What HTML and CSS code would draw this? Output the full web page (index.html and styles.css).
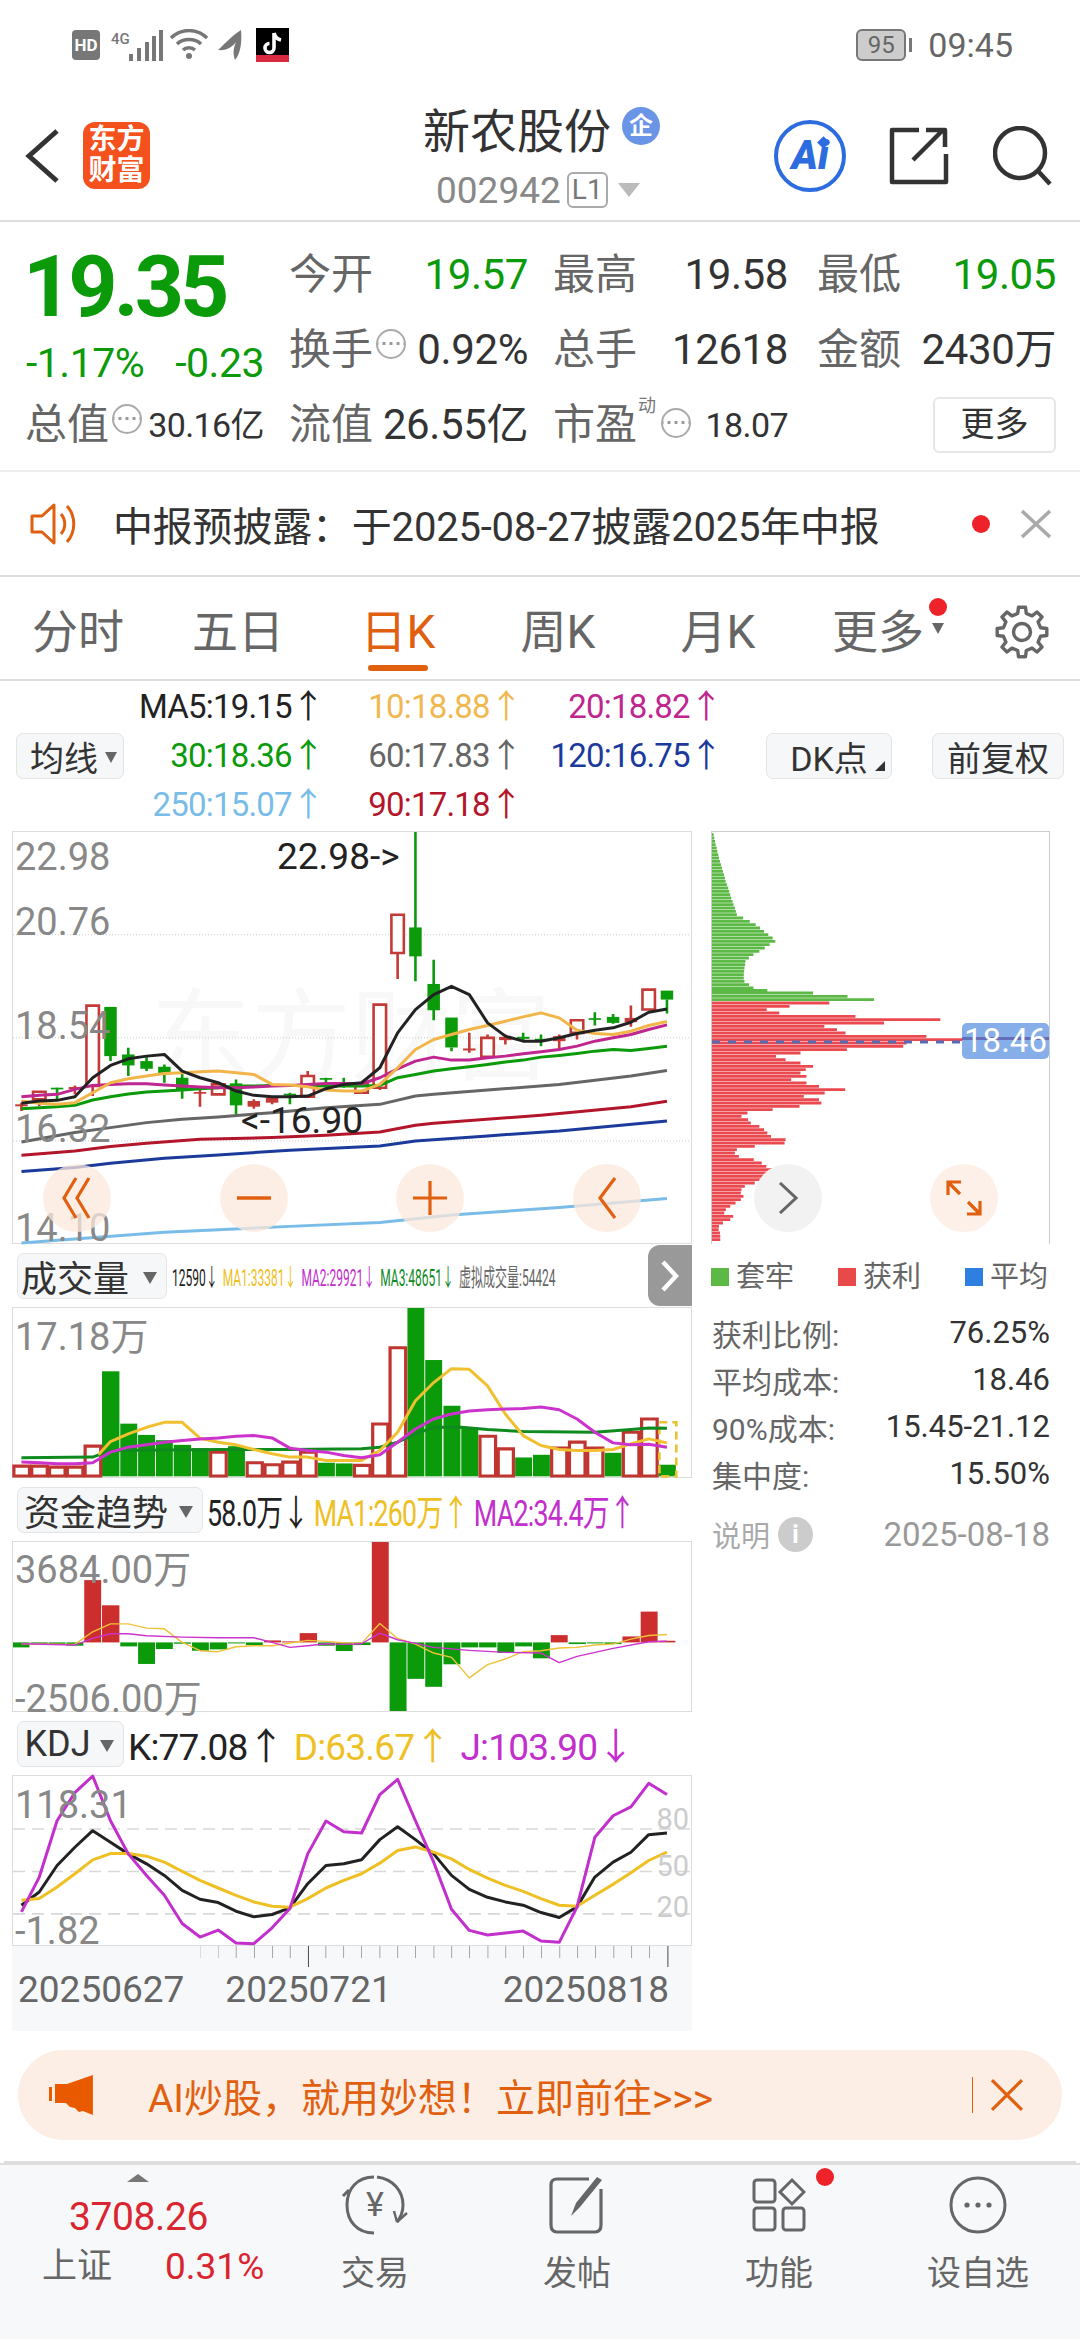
FILE: index.html
```html
<!DOCTYPE html>
<html lang="zh-CN">
<head>
    <meta charset="UTF-8">
    <meta name="viewport" content="width=device-width, initial-scale=1.0">
    <title>新农股份 002942</title>
    <link rel="stylesheet" href="styles.css">
</head>
<body>
    <div class="statusbar">
        <div class="status-left">
            <span class="hd">HD</span>
            <span class="net">4G</span>
            <svg width="36" height="32" viewBox="0 0 36 32"><path d="M3 32V25M11 32V19M19 32V13M26 32V7M33 32V1" stroke="#777" stroke-width="4"/></svg>
            <svg class="wifi" width="40" height="32" viewBox="0 0 40 32" fill="none" stroke="#777" stroke-width="3.4"><path d="M2 9C12-1 28-1 38 9M8 15C14 9 26 9 32 15M14 21C17 18 23 18 26 21"/><circle cx="20" cy="27" r="3" fill="#777" stroke="none"/></svg>
            <svg class="leaf" width="26" height="32" viewBox="0 0 26 32"><path d="M24 1C25 12 24 24 18 31C16 25 16 20 19 13C15 18 10 22 1 21C7 16 14 7 24 1Z" fill="#777"/></svg>
            <span class="tiktok">
                <svg width="22" height="26" viewBox="0 0 22 26"><path d="M12 2V17A4.5 4.5 0 1 1 7.5 12.5M12 2C13 6 15 8 19 9" fill="none" stroke="#fff" stroke-width="3.6"/></svg>
                <i class="tiktok-bar"></i>
            </span>
        </div>
        <div class="status-right">
            <span class="battery"><b>95</b></span><i class="battery-tip"></i>
            <span class="clock">09:45</span>
        </div>
    </div>

    <div class="header">
        <svg class="back" width="36" height="56" viewBox="0 0 36 56"><path d="M32 3L4 28L32 53" fill="none" stroke="#333" stroke-width="5"/></svg>
        <div class="logo">东方<br>财富</div>
        <div class="title-block">
            <div class="title">新农股份<span class="qi">企</span></div>
            <div class="code">002942<span class="l1">L1</span><i class="code-arrow"></i></div>
        </div>
        <div class="ai-icon">Ai<i class="ai-star"></i></div>
        <svg class="share" width="60" height="58" viewBox="0 0 60 58" fill="none" stroke="#333" stroke-width="4.5"><path d="M30 3H3V55H57V27M24 33L54 3M37 3H56V20" stroke-linejoin="round"/></svg>
        <svg class="search" width="60" height="60" viewBox="0 0 60 60" fill="none" stroke="#333" stroke-width="4.5"><circle cx="27" cy="27" r="25"/><path d="M45 45L57 58"/></svg>
    </div>

    <div class="quote">
        <div class="price-block">
            <div class="price">19.35</div>
            <div class="change"><span>-1.17%</span><span>-0.23</span></div>
        </div>
        <div class="cell"><span class="lab">今开</span><span class="val green">19.57</span></div>
        <div class="cell c3"><span class="lab">最高</span><span class="val">19.58</span></div>
        <div class="cell"><span class="lab">最低</span><span class="val green">19.05</span></div>
        <div class="cell"><span class="lab">换手<i class="dots"></i></span><span class="val">0.92%</span></div>
        <div class="cell c3"><span class="lab">总手</span><span class="val">12618</span></div>
        <div class="cell"><span class="lab">金额</span><span class="val">2430万</span></div>
        <div class="cell"><span class="lab">总值<i class="dots"></i></span><span class="val small">30.16亿</span></div>
        <div class="cell"><span class="lab">流值</span><span class="val">26.55亿</span></div>
        <div class="cell c3"><span class="lab">市盈<sup class="dyn">动</sup><i class="dots"></i></span><span class="val small">18.07</span></div>
        <div class="cell end"><span class="more-btn">更多</span></div>
    </div>

    <div class="notice">
        <svg class="speaker" width="52" height="44" viewBox="0 0 52 44" fill="none" stroke="#e0600f" stroke-width="3"><path d="M3 14H13L25 3V41L13 30H3Z" stroke-linejoin="round"/><path d="M32 12C37 18 37 26 32 32M38 4C47 14 47 30 38 40"/></svg>
        <span class="notice-text">中报预披露：于2025-08-27披露2025年中报</span>
        <i class="red-dot"></i>
        <svg class="notice-x" width="32" height="30" viewBox="0 0 32 30"><path d="M2 2L30 28M30 2L2 28" stroke="#aaa" stroke-width="3.6"/></svg>
    </div>

    <div class="tabs">
        <span class="tab">分时</span>
        <span class="tab">五日</span>
        <span class="tab active">日K</span>
        <span class="tab">周K</span>
        <span class="tab">月K</span>
        <span class="tab">更多<i class="tab-dot"></i><i class="tab-arrow"></i></span>
        <svg class="gear" width="54" height="54" viewBox="-27 -27 54 54" fill="none" stroke="#666" stroke-width="3.4" stroke-linejoin="round"><path d="M-4.3-18.5L-3.5-24.8H3.5L4.3-18.5L10.1-16.1L15-20L20-15L16.1-10.1L18.5-4.3L24.8-3.5V3.5L18.5 4.3L16.1 10.1L20 15L15 20L10.1 16.1L4.3 18.5L3.5 24.8H-3.5L-4.3 18.5L-10.1 16.1L-15 20L-20 15L-16.1 10.1L-18.5 4.3L-24.8 3.5V-3.5L-18.5-4.3L-16.1-10.1L-20-15L-15-20L-10.1-16.1Z"/><circle r="8.5"/></svg>
    </div>

    <div class="ma-panel">
        <span class="chip junxian">均线<i class="tri"></i></span>
        <div class="ma-grid">
            <span class="c-black">MA5:19.15↑</span><span class="c-orange">10:18.88↑</span><span class="c-pink">20:18.82↑</span>
            <span class="c-green">30:18.36↑</span><span class="c-grey">60:17.83↑</span><span class="c-navy">120:16.75↑</span>
            <span class="c-sky">250:15.07↑</span><span class="c-red">90:17.18↑</span>
        </div>
        <span class="chip dk">DK点<i class="corner"></i></span>
        <span class="chip fq">前复权</span>
    </div>

    <div class="charts">
        <div class="left-col">
            <div class="pane main-pane">
                <span class="watermark">东方财富</span>
                <svg class="plot" viewBox="28 36 1523 1236" preserveAspectRatio="none">
                    <path d="M28 345H1551M28 655H1551M28 965H1551" stroke="#ccc" stroke-width="1" stroke-dasharray="1 2"/>
                    <g stroke="#c43a36" stroke-width="2.6" fill="none">
                        <path d="M47 850V875M87 840V860M167 798V825M207 800V830M448 810V862M569 840V868M610 830V855M690 755V835M852 805V812M892 400V478M1053 640V700M1094 645V655M1134 645V675M1255 645V688M1295 640V660M1416 558V622"/>
                        <rect x="73" y="817" width="28" height="23" fill="#fff"/><rect x="193" y="558" width="28" height="242" fill="#fff"/><rect x="475" y="795" width="28" height="30" fill="#fff"/><rect x="676" y="770" width="28" height="62" fill="#fff"/><rect x="797" y="795" width="28" height="25" fill="#fff"/><rect x="838" y="555" width="28" height="250" fill="#fff"/><rect x="878" y="285" width="28" height="115" fill="#fff"/><rect x="1080" y="655" width="28" height="57" fill="#fff"/><rect x="1281" y="602" width="28" height="38" fill="#fff"/><rect x="1442" y="510" width="28" height="60" fill="#fff"/>
                    </g>
                    <g fill="#c43a36">
                        <rect x="33" y="855" width="28" height="6"/><rect x="153" y="803" width="28" height="6"/><rect x="434" y="818" width="28" height="5"/><rect x="555" y="845" width="28" height="17"/><rect x="596" y="835" width="28" height="15"/><rect x="1039" y="687" width="28" height="6"/><rect x="1120" y="652" width="28" height="10"/><rect x="1241" y="650" width="28" height="15"/><rect x="1402" y="595" width="28" height="13"/>
                    </g>
                    <g fill="#0a9a0a">
                        <path d="M127 805V845M247 700V725M287 685V770M328 712V755M368 735V790M408 760V838M529 780V885M650 820V855M731 775V805M771 775V805M932 36V485M973 420V602M1013 684V695M1174 640V668M1214 645V680M1335 578V618M1376 583V613M1497 540V582" stroke="#0a9a0a" stroke-width="2.6"/>
                        <rect x="113" y="805" width="28" height="5"/><rect x="233" y="562" width="28" height="148"/><rect x="273" y="705" width="28" height="33"/><rect x="314" y="725" width="28" height="23"/><rect x="354" y="742" width="28" height="23"/><rect x="394" y="775" width="28" height="35"/><rect x="515" y="792" width="28" height="66"/><rect x="636" y="823" width="28" height="5"/><rect x="717" y="776" width="28" height="5"/><rect x="757" y="788" width="28" height="5"/><rect x="918" y="323" width="28" height="87"/><rect x="959" y="493" width="28" height="79"/><rect x="999" y="594" width="28" height="90"/><rect x="1160" y="652" width="28" height="6"/><rect x="1200" y="658" width="28" height="5"/><rect x="1321" y="596" width="28" height="5"/><rect x="1362" y="592" width="28" height="18"/><rect x="1483" y="513" width="28" height="27"/>
                    </g>
                    <g fill="none" stroke-width="3" stroke-linejoin="round">
                        <polyline stroke="#79bce8" points="47,1272 368,1240 650,1222 852,1210 1013,1188 1255,1165 1497,1138"/>
                        <polyline stroke="#1c3a9b" points="47,1057 167,1045 247,1032 368,1017 489,1007 650,993 852,980 932,965 1094,950 1255,935 1497,905"/>
                        <polyline stroke="#b3162a" points="47,1008 167,995 247,982 328,972 448,960 610,955 731,948 852,938 932,918 973,912 1214,888 1416,862 1497,846"/>
                        <polyline stroke="#666" points="47,968 167,940 247,925 328,910 408,900 489,893 610,880 731,865 852,855 932,830 973,825 1094,812 1255,795 1416,770 1497,753"/>
                        <polyline stroke="#0a9a0a" points="47,868 87,865 127,862 167,858 207,842 247,832 287,824 328,818 368,815 408,812 448,808 489,805 529,800 569,800 610,798 650,798 690,798 731,800 771,800 811,800 852,798 892,775 932,765 973,755 1013,748 1053,742 1094,735 1134,728 1174,722 1214,713 1255,708 1295,702 1335,695 1376,690 1416,693 1456,687 1497,680"/>
                        <polyline stroke="#c0268f" points="47,832 87,828 127,825 167,810 207,798 247,795 287,793 328,793 368,797 408,800 448,803 489,805 529,805 569,803 610,800 650,798 690,795 731,792 771,792 811,793 852,775 892,748 932,725 973,713 1013,722 1053,722 1094,715 1134,710 1174,703 1214,697 1255,690 1295,680 1335,665 1376,655 1416,645 1456,630 1497,616"/>
                        <polyline stroke="#f2b54a" points="47,845 87,852 127,855 167,850 207,820 247,790 287,778 328,770 368,762 408,760 448,757 489,755 529,760 569,765 610,795 650,797 690,802 731,812 771,815 811,815 852,795 892,745 932,690 973,660 1013,645 1053,630 1094,618 1134,605 1174,592 1214,580 1255,595 1295,632 1335,642 1376,645 1416,635 1456,618 1497,606"/>
                        <polyline stroke="#222" points="47,852 87,845 127,843 167,832 207,775 247,738 287,718 328,710 368,705 408,755 448,775 489,790 529,815 569,828 610,832 650,832 690,830 731,808 771,795 811,790 852,745 892,640 932,570 973,525 1013,500 1053,525 1094,610 1134,650 1174,665 1214,665 1255,655 1295,642 1335,632 1376,625 1416,608 1456,578 1497,568"/>
                    </g>
                </svg>
                <span class="ylab y1">22.98</span>
                <span class="ylab y2">20.76</span>
                <span class="ylab y3">18.54</span>
                <span class="ylab y4">16.32</span>
                <span class="ylab y5">14.10</span>
                <span class="mark mark-high">22.98-&gt;</span>
                <span class="mark mark-low">&lt;-16.90</span>
                <div class="round-btns">
                    <span class="round"><svg width="30" height="42" viewBox="0 0 30 42" fill="none" stroke="#e0600f" stroke-width="3.2"><path d="M14 1L2 21L14 41M27 1L15 21L27 41"/></svg></span>
                    <span class="round"><svg width="36" height="6" viewBox="0 0 36 6"><path d="M1 3H35" stroke="#e0600f" stroke-width="3.4"/></svg></span>
                    <span class="round"><svg width="36" height="36" viewBox="0 0 36 36"><path d="M1 18H35M18 1V35" stroke="#e0600f" stroke-width="3.2"/></svg></span>
                    <span class="round"><svg width="20" height="42" viewBox="0 0 20 42" fill="none" stroke="#e0600f" stroke-width="3.2"><path d="M18 1L3 21L18 41"/></svg></span>
                </div>
            </div>

            <div class="toolbar">
                <span class="chip pick vol-pick">成交量<i class="tri big"></i></span>
                <span class="tiny"><span class="c-black">12590↓</span> <span class="c-gold">MA1:33381↓</span> <span class="c-violet">MA2:29921↓</span> <span class="c-dgreen">MA3:48651↓</span> <span class="c-grey">虚拟成交量:54424</span></span>
                <span class="expand-tab"><svg width="20" height="32" viewBox="0 0 20 32" fill="none" stroke="#fff" stroke-width="4.4"><path d="M3 2L16 16L3 30"/></svg></span>
            </div>

            <div class="pane sub-pane">
                <span class="ylab v1">17.18万</span>
                <svg class="plot" viewBox="28 205 1523 510" preserveAspectRatio="none">
                    <g fill="#0a9a0a">
                        <rect x="228" y="396" width="39" height="317"/><rect x="269" y="554" width="38" height="159"/><rect x="309" y="588" width="38" height="125"/><rect x="349" y="604" width="38" height="109"/><rect x="389" y="618" width="39" height="95"/><rect x="430" y="628" width="38" height="85"/><rect x="511" y="622" width="38" height="91"/><rect x="713" y="672" width="38" height="41"/><rect x="753" y="674" width="38" height="39"/><rect x="914" y="205" width="38" height="508"/><rect x="954" y="362" width="38" height="351"/><rect x="995" y="500" width="38" height="213"/><rect x="1035" y="565" width="38" height="148"/><rect x="1156" y="656" width="38" height="57"/><rect x="1196" y="648" width="38" height="65"/><rect x="1357" y="642" width="38" height="71"/><rect x="1478" y="678" width="39" height="35"/>
                    </g>
                    <g fill="#fff" stroke="#bf3530" stroke-width="3.2">
                        <rect x="30" y="682" width="35" height="30"/><rect x="70" y="682" width="35" height="30"/><rect x="110" y="685" width="35" height="27"/><rect x="150" y="685" width="35" height="27"/><rect x="190" y="622" width="35" height="90"/><rect x="472" y="640" width="35" height="72"/><rect x="554" y="672" width="34" height="40"/><rect x="594" y="678" width="34" height="34"/><rect x="634" y="670" width="34" height="42"/><rect x="674" y="640" width="35" height="72"/><rect x="795" y="680" width="35" height="32"/><rect x="836" y="555" width="34" height="157"/><rect x="875" y="325" width="35" height="387"/><rect x="1077" y="592" width="35" height="120"/><rect x="1118" y="630" width="34" height="82"/><rect x="1238" y="628" width="34" height="84"/><rect x="1278" y="610" width="35" height="102"/><rect x="1319" y="628" width="34" height="84"/><rect x="1399" y="580" width="35" height="132"/><rect x="1440" y="540" width="35" height="172"/>
                    </g>
                    <rect x="1480" y="550" width="38" height="163" fill="none" stroke="#e8c230" stroke-width="2.6" stroke-dasharray="8 5"/>
                    <g fill="none" stroke-width="3" stroke-linejoin="round">
                        <polyline stroke="#0f8a1f" points="47,657 207,655 247,635 489,632 650,632 811,630 852,625 892,610 932,585 973,565 1035,565 1094,572 1174,578 1335,580 1416,572 1456,567 1497,568"/>
                        <polyline stroke="#f0c030" points="220,648 247,608 287,585 328,565 368,550 408,550 448,598 489,610 529,618 569,632 610,645 650,655 690,655 731,665 771,665 811,665 852,635 892,580 932,485 973,430 1013,388 1053,390 1094,440 1134,525 1174,590 1214,620 1255,632 1295,635 1335,635 1376,632 1416,615 1456,600 1497,612"/>
                        <polyline stroke="#cc33cc" points="47,670 87,672 127,675 167,675 207,672 247,640 287,625 328,618 368,610 408,605 448,600 489,597 529,592 569,590 610,597 650,628 690,635 731,640 771,650 811,657 852,648 892,610 932,570 973,540 1013,525 1053,516 1094,512 1134,510 1174,508 1214,504 1255,512 1295,540 1335,580 1376,612 1416,618 1456,616 1497,625"/>
                    </g>
                </svg>
            </div>

            <div class="toolbar">
                <span class="chip pick fund-pick">资金趋势<i class="tri big"></i></span>
                <span class="metrics fund-vals"><span class="c-black">58.0万↓</span><span class="c-gold">MA1:260万↑</span><span class="c-violet">MA2:34.4万↑</span></span>
            </div>

            <div class="pane sub-pane">
                <span class="ylab f1">3684.00万</span>
                <span class="ylab f2">-2506.00万</span>
                <svg class="plot" viewBox="28 187 1523 510" preserveAspectRatio="none">
                    <g fill="#cc2e2e">
                        <rect x="188" y="302" width="38" height="188"/><rect x="228" y="378" width="39" height="112"/><rect x="592" y="484" width="38" height="6"/><rect x="632" y="487" width="38" height="3"/><rect x="672" y="462" width="39" height="28"/><rect x="834" y="187" width="38" height="303"/><rect x="1236" y="468" width="38" height="22"/><rect x="1397" y="472" width="39" height="18"/><rect x="1438" y="397" width="38" height="93"/><rect x="1478" y="485" width="38" height="5"/>
                    </g>
                    <g fill="#0a9a0a">
                        <rect x="28" y="490" width="37" height="15"/><rect x="68" y="490" width="38" height="6"/><rect x="108" y="490" width="38" height="6"/><rect x="148" y="490" width="38" height="10"/><rect x="269" y="490" width="38" height="12"/><rect x="309" y="490" width="38" height="65"/><rect x="349" y="490" width="38" height="20"/><rect x="389" y="490" width="39" height="4"/><rect x="430" y="490" width="38" height="25"/><rect x="470" y="490" width="39" height="21"/><rect x="511" y="490" width="38" height="3"/><rect x="551" y="490" width="38" height="8"/><rect x="713" y="490" width="38" height="10"/><rect x="753" y="490" width="38" height="26"/><rect x="793" y="490" width="38" height="8"/><rect x="874" y="490" width="38" height="207"/><rect x="914" y="490" width="38" height="110"/><rect x="954" y="490" width="38" height="134"/><rect x="995" y="490" width="38" height="66"/><rect x="1035" y="490" width="38" height="15"/><rect x="1075" y="490" width="39" height="15"/><rect x="1116" y="490" width="38" height="32"/><rect x="1156" y="490" width="38" height="12"/><rect x="1196" y="490" width="38" height="48"/><rect x="1276" y="490" width="39" height="5"/><rect x="1317" y="490" width="38" height="3"/><rect x="1357" y="490" width="38" height="5"/>
                    </g>
                    <g fill="none" stroke-width="1.4" stroke-linejoin="round">
                        <polyline stroke="#efc23a" points="47,494 167,496 207,458 247,434 287,434 328,447 368,449 408,490 448,515 489,518 529,503 569,500 610,500 650,492 690,484 731,487 771,491 811,493 852,433 892,478 932,495 973,522 1013,535 1053,597 1094,557 1134,540 1174,518 1214,515 1255,507 1295,505 1335,498 1376,495 1416,480 1456,469 1497,466"/>
                        <polyline stroke="#cc33cc" points="47,494 167,498 207,478 247,464 287,464 328,470 408,474 489,476 569,476 610,490 650,505 690,500 731,494 771,496 811,494 852,462 892,482 932,493 973,505 1053,514 1134,520 1214,522 1255,551 1295,532 1376,508 1456,488 1497,486"/>
                    </g>
                </svg>
            </div>

            <div class="toolbar">
                <span class="chip pick kdj-pick">KDJ<i class="tri big"></i></span>
                <span class="metrics kdj-vals"><span class="c-black">K:77.08↑</span><span class="c-gold">D:63.67↑</span><span class="c-violet">J:103.90↓</span></span>
            </div>

            <div class="pane sub-pane">
                <span class="ylab k1">118.31</span>
                <span class="ylab k2">-1.82</span>
                <span class="lev l80">80</span>
                <span class="lev l50">50</span>
                <span class="lev l20">20</span>
                <svg class="plot" viewBox="28 170 1523 510" preserveAspectRatio="none">
                    <path d="M28 330H1551M28 458H1551M28 586H1551" stroke="#d8d8d8" stroke-width="1.6" stroke-dasharray="12 7"/>
                    <g fill="none" stroke-width="3" stroke-linejoin="round">
                        <polyline stroke="#222" points="47,560 87,520 127,440 167,385 207,335 247,370 287,405 328,435 368,470 408,515 448,542 489,552 529,578 569,595 610,588 650,568 690,495 731,440 771,435 811,423 852,362 892,323 932,362 973,405 1013,470 1053,512 1094,536 1134,550 1174,560 1214,582 1255,597 1295,565 1335,475 1376,430 1416,400 1456,347 1497,342"/>
                        <polyline stroke="#efc023" points="47,545 87,540 127,505 167,465 207,423 247,404 287,404 328,412 368,430 408,458 448,485 489,508 529,530 569,550 610,563 650,566 690,540 731,508 771,485 811,465 852,433 892,395 932,384 973,400 1013,420 1053,452 1094,478 1134,500 1174,518 1214,540 1255,560 1295,563 1335,530 1376,497 1416,462 1456,425 1497,400"/>
                        <polyline stroke="#c22fcc" points="47,580 87,475 127,305 167,220 207,170 247,305 287,405 328,470 368,530 408,615 448,656 489,635 529,674 569,676 610,628 650,570 690,405 731,306 771,338 811,342 852,226 892,180 932,305 973,430 1013,572 1053,636 1094,650 1134,644 1174,638 1214,668 1255,672 1295,565 1335,355 1376,290 1416,263 1456,192 1497,226"/>
                    </g>
                </svg>
            </div>

            <div class="axis">
                <svg class="axis-ticks" width="680" height="24" viewBox="28 0 1523 24" preserveAspectRatio="none">
                    <path d="M530 0V12M571 0V12M611 0V12M651 0V12M731 0V12M771 0V12M811 0V12M852 0V12M892 0V12M932 0V12M973 0V12M1013 0V12M1053 0V12M1094 0V12M1134 0V12M1174 0V12M1214 0V12M1255 0V12M1295 0V12M1335 0V12M1376 0V12M1416 0V12M1456 0V12" stroke="#777" stroke-width="1.4"/>
                    <path d="M450 0V12" stroke="#ccc" stroke-width="1.4"/><path d="M490 0V12" stroke="#aaa" stroke-width="1.4"/>
                    <path d="M692 0V21M1497 0V21" stroke="#555" stroke-width="2.4"/>
                </svg>
                <div class="dates"><span>20250627</span><span class="d2">20250721</span><span class="d3">20250818</span></div>
            </div>
        </div>

        <div class="right-col">
            <div class="chip-pane">
                <svg class="plot" viewBox="33 37 1017 1236" preserveAspectRatio="none">
                    <path stroke="#5cb946" stroke-width="2.9" fill="none" d="M33 45H38M33 55H40M33 65H42M33 75H44M33 85H47M33 95H49M33 105H52M33 115H54M33 125H57M33 135H60M33 145H63M33 155H66M33 165H69M33 175H72M33 185H74M33 195H78M33 205H82M33 215H85M33 225H88M33 235H91M33 245H95M33 255H98M33 265H102M33 275H105M33 285H108M33 295H127M33 305H147M33 315H165M33 325H178M33 335H190M33 345H203M33 355H216M33 365H224M33 375H207M33 385H192M33 395H176M33 405H158M33 415H144M33 425H134M33 435H133M33 445H131M33 455H130M33 465H129M33 475H129M33 485H131M33 495H145M33 505H158M33 512H200M33 520H338M33 530H442M33 540H522"/>
                    <path stroke="#ea4a4f" stroke-width="2.9" fill="none" d="M33 550H387M33 560H267M33 570H198M33 580H236M33 590H466M33 600H722M33 610H552M33 620H372M33 630H410M33 640H436M33 650H680M33 660H800M33 670H620M33 680H610M33 690H440M33 700H300M33 710H226M33 720H255M33 730H300M33 740H338M33 750H316M33 760H300M33 770H318M33 780H272M33 790H318M33 800H356M33 810H435M33 820H373M33 830H310M33 840H356M33 850H363M33 860H297M33 870H216M33 880H140M33 890H122M33 900H142M33 910H150M33 920H176M33 930H190M33 940H200M33 950H211M33 960H255M33 970H252M33 980H162M33 990H108M33 1000H102M33 1010H114M33 1020H159M33 1030H183M33 1040H197M33 1050H241M33 1060H295M33 1070H275M33 1080H232M33 1090H162M33 1100H132M33 1110H122M33 1120H120M33 1130H128M33 1140H120M33 1150H104M33 1160H88M33 1170H75M33 1180H70M33 1190H97M33 1200H88M33 1210H66M33 1220H54M33 1230H53M33 1240H57M33 1250H58M33 1260H58"/>
                    <path d="M33 667H790" stroke="#5a6bb5" stroke-width="3" stroke-dasharray="8 8"/>
                </svg>
                <span class="avg-tag">18.46</span>
                <span class="round grey-round"><svg width="20" height="32" viewBox="0 0 20 32" fill="none" stroke="#666" stroke-width="3"><path d="M2 1L18 16L2 31"/></svg></span>
                <span class="round fit-round"><svg width="36" height="36" viewBox="0 0 36 36" fill="none" stroke="#e0600f" stroke-width="3.2"><path d="M2 15V2H15M2 2L14 14M34 21V34H21M34 34L22 22"/></svg></span>
            </div>
            <div class="legend">
                <span><i class="sq sq-green"></i>套牢</span>
                <span><i class="sq sq-red"></i>获利</span>
                <span><i class="sq sq-blue"></i>平均</span>
            </div>
            <div class="stats">
                <div class="stat"><span>获利比例:</span><b>76.25%</b></div>
                <div class="stat"><span>平均成本:</span><b>18.46</b></div>
                <div class="stat"><span>90%成本:</span><b>15.45-21.12</b></div>
                <div class="stat"><span>集中度:</span><b>15.50%</b></div>
            </div>
            <div class="stat-foot">
                <span class="explain">说明<i class="info">i</i></span>
                <span>2025-08-18</span>
            </div>
        </div>
    </div>

    <div class="ad">
        <svg class="horn" width="48" height="40" viewBox="0 0 48 40"><path d="M2 12H5V26H2ZM8 9H20L46 0V40L36 36L32 37L28 33L23 32L19 28L8 28Z" fill="#e95a00"/></svg>
        <span class="ad-text">AI炒股，就用妙想！立即前往&gt;&gt;&gt;</span>
        <i class="ad-line"></i>
        <svg width="34" height="34" viewBox="0 0 34 34"><path d="M2 2L32 32M32 2L2 32" stroke="#e0600f" stroke-width="3.2"/></svg>
    </div>

    <div class="bottom-nav">
        <div class="index">
            <i class="index-arrow"></i>
            <div class="index-val">3708.26</div>
            <div class="index-row"><span>上证</span><b>0.31%</b></div>
        </div>
        <div class="nav-item">
            <svg width="68" height="60" viewBox="0 0 68 60" fill="none" stroke="#666" stroke-width="3"><path d="M33 2C16 2 6 14 6 30C6 46 16 58 33 58M8 15L2 21M36 2C52 4 62 16 62 30C62 36 60 42 56 47"/><path d="M56 47L66 38M56 47L53 36" stroke-width="2.4"/></svg>
            <span class="yen">¥</span>
            <span>交易</span>
        </div>
        <div class="nav-item">
            <svg width="60" height="60" viewBox="0 0 60 60" fill="none" stroke="#666" stroke-width="3.2"><path d="M42 4H10Q4 4 4 10V50Q4 57 10 57H48Q54 57 54 50V14"/><path d="M24 41L29 28L50 2L55 5L33 32Z" fill="#666" stroke="none"/></svg>
            <span>发帖</span>
        </div>
        <div class="nav-item">
            <svg width="54" height="54" viewBox="0 0 54 54" fill="none" stroke="#666" stroke-width="3"><rect x="2" y="2" width="21" height="22" rx="3"/><path d="M40 2L52 14L40 26L28 14Z"/><rect x="2" y="30" width="21" height="22" rx="3"/><rect x="31" y="30" width="21" height="22" rx="3"/></svg>
            <i class="nav-dot"></i>
            <span>功能</span>
        </div>
        <div class="nav-item wide">
            <svg width="58" height="58" viewBox="0 0 58 58" fill="none" stroke="#666" stroke-width="3"><circle cx="29" cy="29" r="27"/><circle cx="18" cy="29" r="2.6" fill="#666" stroke="none"/><circle cx="29" cy="29" r="2.6" fill="#666" stroke="none"/><circle cx="40" cy="29" r="2.6" fill="#666" stroke="none"/></svg>
            <span>设自选</span>
        </div>
    </div>
</body>
</html>
```

FILE: styles.css
```css
* {
    box-sizing: border-box;
}
body {
    margin: 0;
    width: 1080px;
    height: 2340px;
    overflow: hidden;
    background: #fff;
    color: #333;
    font-family: Roboto, "Noto Sans CJK SC", sans-serif;
}
i {
    font-style: normal;
}

/* status bar */
.statusbar {
    height: 90px;
    padding: 28px 67px 0 72px;
    display: flex;
    justify-content: space-between;
    align-items: flex-start;
}
.status-left {
    display: flex;
    align-items: center;
    height: 34px;
}
.hd {
    width: 28px;
    height: 30px;
    background: #777;
    color: #fff;
    border-radius: 4px;
    font-size: 17px;
    font-weight: 700;
    line-height: 30px;
    text-align: center;
}
.net {
    width: 17px;
    margin-left: 11px;
    margin-top: -12px;
    font-size: 15px;
    font-weight: 500;
    color: #777;
}
.wifi {
    margin-left: 5px;
}
.leaf {
    margin-left: 8px;
}
.tiktok {
    width: 33px;
    height: 34px;
    margin-left: 13px;
    background: #000;
    display: flex;
    flex-direction: column;
    align-items: center;
    padding-top: 3px;
}
.tiktok-bar {
    width: 33px;
    height: 7px;
    margin-top: -2px;
    background: #d92a42;
}
.status-right {
    display: flex;
    align-items: center;
    margin-top: -3px;
    color: #666;
}
.battery {
    width: 50px;
    height: 32px;
    border: 2px solid #777;
    border-radius: 6px;
    background: #ccc;
    font-size: 24px;
    line-height: 28px;
    text-align: center;
}
.battery b {
    font-weight: 400;
}
.battery-tip {
    width: 3px;
    height: 14px;
    margin-left: 3px;
    background: #777;
}
.clock {
    margin-left: 16px;
    font-size: 34px;
}

/* stock header */
.header {
    height: 132px;
    position: relative;
    border-bottom: 2px solid #ddd;
    display: flex;
    align-items: flex-start;
}
.back {
    margin: 38px 0 0 25px;
}
.logo {
    width: 67px;
    height: 67px;
    margin: 32px 0 0 22px;
    background: #f4511e;
    border-radius: 12px;
    color: #fff;
    font-size: 28px;
    font-weight: 700;
    line-height: 31px;
    text-align: center;
    padding-top: 2px;
}
.title-block {
    width: 350px;
    margin-left: 273px;
}
.title {
    font-size: 47px;
    line-height: 68px;
    display: flex;
    align-items: center;
    height: 68px;
    padding-top: 16px;
    white-space: nowrap;
}
.qi {
    width: 38px;
    height: 38px;
    margin-left: 11px;
    margin-top: -12px;
    border-radius: 50%;
    background: #6a94e6;
    color: #fff;
    font-size: 24px;
    font-weight: 700;
    line-height: 38px;
    text-align: center;
}
.code {
    margin: 14px 0 0 13px;
    display: flex;
    align-items: center;
    height: 36px;
    font-size: 37px;
    color: #888;
}
.l1 {
    width: 41px;
    height: 36px;
    margin-left: 6px;
    border: 2px solid #aaa;
    border-radius: 6px;
    font-size: 28px;
    line-height: 32px;
    text-align: center;
    color: #777;
}
.code-arrow {
    margin-left: 10px;
    border-left: 11px solid transparent;
    border-right: 11px solid transparent;
    border-top: 14px solid #bbb;
}
.ai-icon {
    width: 72px;
    height: 72px;
    margin: 30px 0 0 1px;
    border: 4px solid #2c6cdf;
    border-radius: 50%;
    color: #2c6cdf;
    font-size: 40px;
    font-weight: 900;
    font-style: italic;
    line-height: 64px;
    text-align: center;
    position: relative;
}
.ai-star {
    position: absolute;
    top: 14px;
    right: 14px;
    width: 9px;
    height: 9px;
    background: #2c6cdf;
    transform: rotate(45deg);
}
.share {
    margin: 37px 0 0 43px;
}
.search {
    margin: 36px 0 0 44px;
}

/* quote grid */
.quote {
    height: 250px;
    padding: 15px 24px 0 26px;
    border-bottom: 2px solid #eee;
    display: grid;
    grid-template-columns: repeat(4, 238px);
    grid-auto-rows: 75px;
    column-gap: 26px;
    align-items: center;
}
.price-block {
    grid-row: span 2;
    align-self: start;
}
.price {
    height: 95px;
    margin: 2px 0 0 -3px;
    color: #0a9a0a;
    font-size: 86px;
    font-weight: 700;
    line-height: 95px;
    letter-spacing: -4px;
}
.change {
    margin-top: 6px;
    display: flex;
    justify-content: space-between;
    color: #0a9a0a;
    font-size: 41px;
    line-height: 46px;
    letter-spacing: -.5px;
}
.cell {
    display: flex;
    justify-content: space-between;
    align-items: center;
}
.cell.end {
    justify-content: flex-end;
}
.cell.c3 {
    padding-right: 4px;
}
.lab {
    display: flex;
    align-items: center;
    position: relative;
    color: #666;
    font-size: 42px;
    line-height: 50px;
    margin-left: -1px;
}
.val {
    color: #333;
    font-size: 42px;
    line-height: 50px;
    letter-spacing: -.4px;
}
.val.small {
    font-size: 34px;
    letter-spacing: -.6px;
}
.green {
    color: #0a9a0a;
}
.dots {
    width: 30px;
    height: 30px;
    margin-left: 3px;
    margin-top: -12px;
    border: 2px solid #aaa;
    border-radius: 50%;
    color: #999;
    font-size: 0;
    background: radial-gradient(circle at 50% 50%, #999 1.4px, transparent 1.8px) center/7px 7px repeat-x;
}
.dyn {
    position: absolute;
    top: -4px;
    left: 85px;
    font-size: 18px;
    line-height: 20px;
    color: #777;
}
.cell .lab .dyn + .dots {
    margin-left: 24px;
    margin-top: -4px;
}
.more-btn {
    width: 123px;
    height: 56px;
    border: 2px solid #e6e6e6;
    border-radius: 6px;
    color: #333;
    font-size: 34px;
    line-height: 50px;
    text-align: center;
}

/* notice row */
.notice {
    height: 105px;
    padding-left: 29px;
    border-bottom: 2px solid #ddd;
    display: flex;
    align-items: center;
}
.notice-text {
    width: 859px;
    margin-left: 32px;
    font-size: 40px;
    color: #333;
    letter-spacing: -.2px;
}
.red-dot {
    width: 18px;
    height: 18px;
    border-radius: 50%;
    background: #ee2229;
}
.notice-x {
    margin-left: 30px;
}

/* period tabs */
.tabs {
    height: 104px;
    padding-top: 8px;
    margin-left: -2px;
    border-bottom: 2px solid #ddd;
    display: flex;
    align-items: center;
    position: relative;
}
.tab {
    width: 160px;
    position: relative;
    color: #666;
    font-size: 46px;
    text-align: center;
    line-height: 56px;
}
.tab.active {
    color: #e0600f;
}
.tab.active::after {
    content: "";
    position: absolute;
    left: 50px;
    bottom: -11px;
    width: 60px;
    height: 6px;
    border-radius: 3px;
    background: #e0600f;
}
.tab-dot {
    position: absolute;
    top: -6px;
    right: 11px;
    width: 18px;
    height: 18px;
    border-radius: 50%;
    background: #ee2229;
}
.tab-arrow {
    position: absolute;
    top: 19px;
    right: 14px;
    border-left: 6px solid transparent;
    border-right: 6px solid transparent;
    border-top: 11px solid #666;
}
.gear {
    margin-left: 37px;
}

/* indicator legend */
.ma-panel {
    height: 150px;
    padding-left: 16px;
    display: flex;
    align-items: center;
    position: relative;
}
.chip {
    height: 46px;
    display: flex;
    align-items: center;
    justify-content: center;
    background: #f6f7f9;
    border: 1px solid #e4e4e4;
    border-radius: 7px;
    color: #333;
    font-size: 34px;
    position: relative;
    flex: none;
}
.junxian {
    width: 108px;
    padding-right: 12px;
}
.tri {
    position: absolute;
    right: 6px;
    top: 18px;
    border-left: 6px solid transparent;
    border-right: 6px solid transparent;
    border-top: 11px solid #666;
}
.tri.big {
    right: 9px;
    top: 18px;
    border-left-width: 7px;
    border-right-width: 7px;
    border-top-width: 12px;
}
.corner {
    position: absolute;
    right: 6px;
    bottom: 7px;
    border-left: 10px solid transparent;
    border-bottom: 10px solid #333;
}
.dk {
    width: 126px;
    margin-left: 44px;
}
.fq {
    width: 132px;
    margin-left: 40px;
}
.ma-grid {
    width: 598px;
    display: grid;
    grid-template-columns: 200px 198px 200px;
    grid-auto-rows: 49px;
    font-size: 33px;
    line-height: 48px;
    text-align: right;
    white-space: nowrap;
    letter-spacing: -.8px;
}
.c-black { color: #222; }
.c-orange { color: #f0b84e; }
.c-pink { color: #c0268f; }
.c-green { color: #0a9a0a; }
.c-grey { color: #666; }
.c-navy { color: #1c3a9b; }
.c-sky { color: #79bce8; }
.c-red { color: #b3162a; }
.c-gold { color: #efc023; }
.c-violet { color: #c22fcc; }
.c-dgreen { color: #0f8a1f; }

/* chart columns */
.charts {
    padding-left: 12px;
    margin-bottom: 18px;
    display: grid;
    grid-template-columns: 680px 339px;
    column-gap: 19px;
    height: 1201px;
}
.left-col {
    position: relative;
}
.pane {
    position: relative;
    border: 1px solid #ddd;
    background: #fff;
}
.main-pane {
    height: 413px;
}
.sub-pane {
    height: 171px;
}
.plot {
    display: block;
    width: 100%;
    height: 100%;
    overflow: visible;
}
.plot * {
    vector-effect: non-scaling-stroke;
}
.watermark {
    position: absolute;
    z-index: 0;
    left: 138px;
    top: 146px;
    font-size: 100px;
    line-height: 120px;
    color: #f8f8f8;
    white-space: nowrap;
}
.main-pane .plot {
    position: relative;
    z-index: 1;
}
.ylab {
    position: absolute;
    z-index: 1;
    left: 2px;
    font-size: 38px;
    line-height: 40px;
    color: #888;
    white-space: nowrap;
}
.y1 { top: 5px; }
.y2 { top: 70px; }
.y3 { top: 174px; }
.y4 { top: 277px; }
.y5 { top: 376px; }
.v1 { top: 9px; }
.f1 { top: 8px; }
.f2 { top: 137px; }
.k1 { top: 9px; }
.k2 { top: 135px; }
.mark {
    position: absolute;
    z-index: 2;
    color: #222;
    font-size: 37px;
    line-height: 40px;
    white-space: nowrap;
}
.mark-high {
    left: 264px;
    top: 5px;
}
.mark-low {
    left: 228px;
    top: 269px;
}
.round-btns {
    position: absolute;
    z-index: 2;
    left: 30px;
    top: 332px;
    width: 598px;
    display: flex;
    justify-content: space-between;
}
.round {
    width: 68px;
    height: 68px;
    border-radius: 50%;
    background: rgba(252, 232, 220, .75);
    display: flex;
    align-items: center;
    justify-content: center;
}
.toolbar {
    height: 63px;
    padding-left: 5px;
    display: flex;
    align-items: center;
    position: relative;
    white-space: nowrap;
}
.pick {
    font-size: 36px;
}
.vol-pick {
    width: 150px;
    padding-right: 34px;
}
.fund-pick {
    width: 186px;
    padding-right: 28px;
}
.kdj-pick {
    width: 107px;
    padding-right: 26px;
}
.tiny {
    width: 766px;
    margin-left: 5px;
    margin-right: -383px;
    transform: scaleX(.5);
    transform-origin: left center;
    font-size: 24px;
    word-spacing: 4px;
}
.expand-tab {
    position: absolute;
    z-index: 2;
    right: 0;
    top: 1px;
    width: 44px;
    height: 61px;
    border-radius: 12px 0 0 12px;
    background: #999;
    display: flex;
    align-items: center;
    justify-content: center;
}
.metrics {
    margin-left: 4px;
    display: flex;
    gap: 16px;
    font-size: 37px;
    letter-spacing: -1px;
}
.fund-vals {
    width: 560px;
    margin-right: -142px;
    gap: 7px;
    font-size: 36px;
    transform: scaleX(.745);
    transform-origin: left center;
}
.kdj-vals {
    gap: 10px;
    letter-spacing: -.8px;
}
.lev {
    position: absolute;
    z-index: 2;
    right: 2px;
    font-size: 29px;
    line-height: 32px;
    color: #ccc;
}
.l80 { top: 27px; }
.l50 { top: 74px; }
.l20 { top: 115px; }
.axis {
    height: 85px;
    background: #f7f8fa;
}
.axis-ticks {
    display: block;
}
.dates {
    position: relative;
    height: 45px;
    color: #666;
    font-size: 37px;
    line-height: 40px;
    display: flex;
    padding: 0 0 0 6px;
}
.d2 {
    margin-left: 41px;
}
.d3 {
    margin-left: 111px;
}

/* chip distribution */
.chip-pane {
    height: 413px;
    position: relative;
    border: 1px solid #ccc;
    border-bottom: 0;
}
.avg-tag {
    position: absolute;
    z-index: 0;
    right: 0;
    top: 191px;
    width: 87px;
    height: 36px;
    border-radius: 5px;
    background: #86aee8;
    color: #fff;
    font-size: 33px;
    line-height: 36px;
    text-align: center;
}
.avg-tag::before {
    content: "";
    position: absolute;
    z-index: -1;
    left: 0;
    right: 0;
    top: 14px;
    height: 3px;
    background: rgba(90, 90, 170, .75);
}
.grey-round {
    position: absolute;
    left: 42px;
    top: 332px;
    background: #f2f2f2;
}
.fit-round {
    position: absolute;
    left: 218px;
    top: 332px;
    background: #fdf0e8;
}
.legend {
    height: 55px;
    padding-top: 10px;
    display: flex;
    justify-content: space-between;
    color: #666;
    font-size: 29px;
    line-height: 36px;
}
.legend span {
    display: flex;
    align-items: center;
    margin-right: 2px;
}
.sq {
    width: 18px;
    height: 18px;
    margin-right: 7px;
}
.sq-green { background: #5cb946; }
.sq-red { background: #e84a4a; }
.sq-blue { background: #2f7fe0; }
.stats {
    margin-top: 10px;
}
.stat {
    height: 47px;
    display: flex;
    justify-content: space-between;
    align-items: center;
    color: #666;
    font-size: 30px;
    padding-left: 1px;
}
.stat b {
    font-weight: 400;
    color: #333;
    font-size: 31px;
}
.stat-foot {
    margin-top: 16px;
    display: flex;
    justify-content: space-between;
    align-items: center;
    color: #999;
    font-size: 33px;
    padding-left: 1px;
}
.explain {
    display: flex;
    align-items: center;
    color: #aaa;
    font-size: 29px;
}
.info {
    width: 35px;
    height: 35px;
    margin-left: 8px;
    border-radius: 50%;
    background: #ccc;
    color: #fff;
    font-size: 26px;
    font-weight: 700;
    line-height: 35px;
    text-align: center;
}

/* ad banner */
.ad {
    height: 90px;
    margin: 0 18px;
    padding: 0 38px 0 29px;
    background: #fdeee5;
    border-radius: 45px;
    display: flex;
    align-items: center;
}
.ad-text {
    width: 826px;
    margin-left: 53px;
    color: #e0600f;
    font-size: 39px;
}
.ad-line {
    width: 1px;
    height: 36px;
    margin-right: 17px;
    background: #e0600f;
}

/* bottom nav */
.bottom-nav {
    height: 176px;
    margin-top: 23px;
    background: #f7f8fa;
    border-top: 2px solid #ddd;
    box-shadow: 0 -6px 0 -4px #ddd;
    display: flex;
    position: relative;
}
.index {
    width: 274px;
    padding-left: 42px;
    position: relative;
}
.index-arrow {
    position: absolute;
    left: 127px;
    top: 9px;
    border-left: 11px solid transparent;
    border-right: 11px solid transparent;
    border-bottom: 8px solid #777;
}
.index-val {
    margin: 30px 0 0 27px;
    color: #d9252f;
    font-size: 39px;
    line-height: 44px;
    letter-spacing: -.4px;
}
.index-row {
    display: flex;
    align-items: center;
    margin-top: 6px;
    color: #666;
    font-size: 35px;
    line-height: 44px;
}
.index-row b {
    margin-left: 53px;
    font-weight: 400;
    color: #d9252f;
    font-size: 37px;
}
.nav-item {
    width: 202px;
    position: relative;
    padding-top: 10px;
    display: flex;
    flex-direction: column;
    align-items: center;
    color: #666;
    font-size: 34px;
    line-height: 44px;
}
.nav-item svg {
    height: 60px;
    margin-bottom: 16px;
}
.nav-item.wide {
    width: 196px;
}
.yen {
    position: absolute;
    top: 14px;
    left: 0;
    right: 0;
    text-align: center;
    font-size: 34px;
    line-height: 50px;
}
.nav-dot {
    position: absolute;
    top: 3px;
    left: 138px;
    width: 18px;
    height: 18px;
    border-radius: 50%;
    background: #ee2229;
}
```
